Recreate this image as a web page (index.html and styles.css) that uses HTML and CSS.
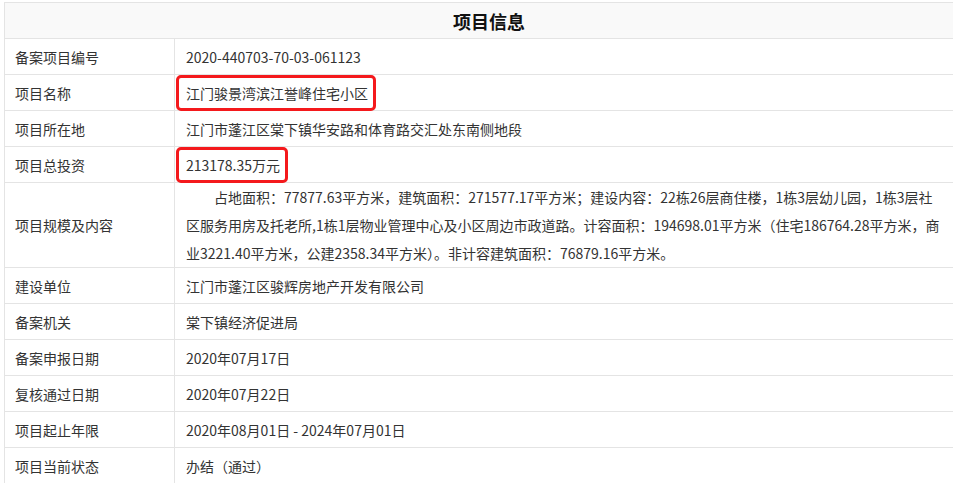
FILE: index.html
```html
<!DOCTYPE html>
<html lang="zh-CN">
  <head>
    <meta charset="UTF-8" />
    <meta name="viewport" content="width=device-width, initial-scale=1.0" />
    <title>项目信息</title>
    <link rel="stylesheet" href="styles.css">
  </head>
  <body>
    <div class="wrap">
      <table class="info">
        <tr><th colspan="2" class="title">项目信息</th></tr>
        <tr><td class="label">备案项目编号</td><td>2020-440703-70-03-061123</td></tr>
        <tr><td class="label">项目名称</td><td><span class="mark">江门骏景湾滨江誉峰住宅小区</span></td></tr>
        <tr><td class="label">项目所在地</td><td>江门市蓬江区棠下镇华安路和体育路交汇处东南侧地段</td></tr>
        <tr><td class="label">项目总投资</td><td><span class="mark">213178.35万元</span></td></tr>
        <tr class="tall">
          <td class="label">项目规模及内容</td>
          <td class="para">占地面积：77877.63平方米，建筑面积：271577.17平方米；建设内容：22栋26层商住楼，1栋3层幼儿园，1栋3层社<br>区服务用房及托老所,1栋1层物业管理中心及小区周边市政道路。计容面积：194698.01平方米（住宅186764.28平方米，商<br>业3221.40平方米，公建2358.34平方米）。非计容建筑面积：76879.16平方米。</td>
        </tr>
        <tr><td class="label">建设单位</td><td>江门市蓬江区骏辉房地产开发有限公司</td></tr>
        <tr><td class="label">备案机关</td><td>棠下镇经济促进局</td></tr>
        <tr><td class="label">备案申报日期</td><td>2020年07月17日</td></tr>
        <tr><td class="label">复核通过日期</td><td>2020年07月22日</td></tr>
        <tr><td class="label">项目起止年限</td><td>2020年08月01日 - 2024年07月01日</td></tr>
        <tr><td class="label">项目当前状态</td><td>办结（通过）</td></tr>
      </table>
    </div>
  </body>
</html>
```
FILE: styles.css
```css
body {
  margin: 0;
  padding: 0;
  background: #fff;
  font-family: "Noto Sans CJK SC", "Noto Sans", sans-serif;
  color: #333;
  overflow: hidden;
}

.wrap {
  padding: 2px 0 0 4px;
}

.info {
  width: 970px;
  border-collapse: collapse;
  font-size: 14px;
  line-height: 20px;
}

.info th,
.info td {
  border: 1px solid #e4e4e4;
  height: 35px;
  padding: 0 0 0 11px;
  text-align: left;
  vertical-align: middle;
}

.info .title {
  background: #f9f9f9;
  text-align: center;
  font-size: 18px;
  font-weight: bold;
  color: #111;
  padding: 0;
}

.info .label {
  width: 159px;
  padding-left: 10px;
}

.info .para {
  line-height: 28px;
  text-indent: 2em;
  white-space: nowrap;
}

.tall td {
  height: 84px;
}

.mark {
  position: relative;
}

.mark::after {
  content: "";
  position: absolute;
  left: -10px;
  right: -8px;
  top: -8px;
  bottom: -8px;
  border: 3px solid #f4191c;
  border-radius: 5px;
}
```
